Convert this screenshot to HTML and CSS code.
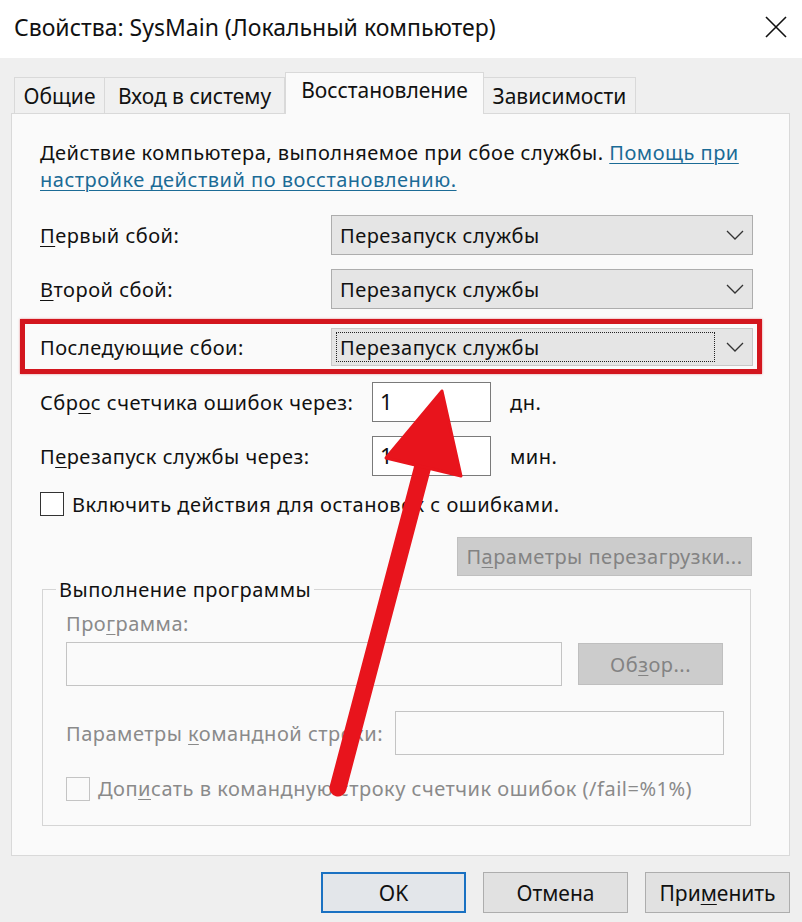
FILE: index.html
```html
<!DOCTYPE html>
<html lang="ru">
<head>
<meta charset="utf-8">
<link rel="stylesheet" href="styles.css">
</head>
<body>
<div class="window">
  <div class="titlebar">
    <span class="title">Свойства: SysMain (Локальный компьютер)</span>
    <svg class="close" width="22" height="22" viewBox="0 0 22 22"><path d="M1 1 L21 21 M21 1 L1 21" stroke="#111" stroke-width="1.6" fill="none"/></svg>
  </div>
  <div class="body">
    <div class="tabs">
      <div class="tab t1">Общие</div>
      <div class="tab t2">Вход в систему</div>
      <div class="tab t3 active">Восстановление</div>
      <div class="tab t4">Зависимости</div>
    </div>
    <div class="panel">
      <p class="desc">Действие компьютера, выполняемое при сбое службы. <span class="link">Помощь при</span><br><span class="link">настройке действий по восстановлению.</span></p>

      <div class="row r1">
        <span class="label"><u>П</u>ервый сбой:</span>
        <div class="combo"><span class="combo-text">Перезапуск службы</span><svg class="chev" width="18" height="10" viewBox="0 0 18 10"><path d="M1 1 L9 9 L17 1" stroke="#333" stroke-width="1.3" fill="none"/></svg></div>
      </div>
      <div class="row r2">
        <span class="label"><u>В</u>торой сбой:</span>
        <div class="combo"><span class="combo-text">Перезапуск службы</span><svg class="chev" width="18" height="10" viewBox="0 0 18 10"><path d="M1 1 L9 9 L17 1" stroke="#333" stroke-width="1.3" fill="none"/></svg></div>
      </div>
      <div class="row r3 marked">
        <span class="label">Последующие сбои:</span>
        <div class="combo"><span class="combo-text focus">Перезапуск службы</span><svg class="chev" width="18" height="10" viewBox="0 0 18 10"><path d="M1 1 L9 9 L17 1" stroke="#333" stroke-width="1.3" fill="none"/></svg></div>
      </div>
      <div class="row r4">
        <span class="label short">Сбр<u>о</u>с счетчика ошибок через:</span>
        <div class="num">1</div>
        <span class="unit">дн.</span>
      </div>
      <div class="row r5">
        <span class="label short">П<u>е</u>резапуск службы через:</span>
        <div class="num">1</div>
        <span class="unit">мин.</span>
      </div>
      <div class="check-row">
        <span class="box"></span>
        <span class="check-label">Включить действия для остановок с ошибками.</span>
      </div>
      <div class="btn-row">
        <div class="btn disabled wide">П<u>а</u>раметры перезагрузки...</div>
      </div>

      <fieldset class="group">
        <legend>Выполнение программы</legend>
        <div class="g-label">Про<u>г</u>рамма:</div>
        <div class="g-prog">
          <div class="g-input prog"></div>
          <div class="btn disabled browse">Об<u>з</u>ор...</div>
        </div>
        <div class="g-args">
          <span class="g-label inline">Параметры <u>к</u>омандной строки:</span>
          <div class="g-input args"></div>
        </div>
        <div class="g-check">
          <span class="box light"></span>
          <span class="g-label inline">Доп<u>и</u>сать в командную строку счетчик ошибок (/fail=%1%)</span>
        </div>
      </fieldset>
    </div>
    <div class="footer">
      <div class="btn ok">OK</div>
      <div class="btn">Отмена</div>
      <div class="btn">При<u>м</u>енить</div>
    </div>
  </div>
  <svg class="arrow" width="802" height="922" viewBox="0 0 802 922">
    <path d="M338 788 L424 462" stroke="#e8141c" stroke-width="17" stroke-linecap="round" fill="none"/>
    <path d="M442 391 L386 458 L461 476 Z" fill="#e8141c" stroke="#e8141c" stroke-width="3" stroke-linejoin="round"/>
  </svg>
</div>
</body>
</html>
```

FILE: styles.css
```css
* { box-sizing: border-box; }
html, body { margin: 0; padding: 0; }
body {
  width: 802px;
  height: 922px;
  overflow: hidden;
  font-family: "Noto Sans", "Open Sans", sans-serif;
  font-size: 20px;
  letter-spacing: 0.5px;
  color: #111;
  background: #efefef;
}
u { text-decoration: underline; text-underline-offset: 3px; text-decoration-thickness: 1px; }
.window { position: relative; width: 802px; height: 922px; }
.titlebar {
  height: 58px;
  background: #fff;
  display: flex;
  align-items: center;
  justify-content: space-between;
  padding: 0 15px 4px 14px;
}
.title { font-size: 23px; letter-spacing: 0; color: #111; }
.body { padding: 14px 12px 0 11px; }
.tabs { display: flex; align-items: flex-end; height: 41px; padding-left: 3px; position: relative; z-index: 2; }
.tab {
  height: 36px;
  border: 1px solid #d9d9d9;
  border-bottom: none;
  background: #f0f0f0;
  display: flex;
  align-items: center;
  justify-content: center;
  font-size: 21px;
  letter-spacing: 0;
}
.t1 { width: 91px; }
.t2 { width: 180px; border-left: none; }
.t3 { width: 199px; }
.t4 { width: 152px; border-left: none; }
.tab.active { height: 42px; background: #fafafa; margin-bottom: -1px; padding-bottom: 8px; }
.panel {
  position: relative;
  z-index: 1;
  background: #fafafa;
  border: 1px solid #d9d9d9;
  height: 743px;
  padding: 25px 36px 0 28px;
}
.desc { margin: 0; line-height: 27px; }
.link { color: #1b6b96; text-decoration: underline; text-underline-offset: 3px; text-decoration-thickness: 1px; }
.row { display: flex; align-items: center; height: 40px; position: relative; }
.r1 { margin-top: 22px; }
.r2 { margin-top: 14px; }
.r3 { margin-top: 19px; height: 38px; }
.r4 { margin-top: 16px; }
.r5 { margin-top: 14px; }
.label { width: 291px; flex: none; }
.label.short { width: 332px; }
.combo {
  width: 422px;
  height: 40px;
  background: #e5e5e5;
  border: 1px solid #adadad;
  display: flex;
  align-items: center;
  justify-content: space-between;
  padding: 0 8px 0 5px;
}
.r3 .combo { height: 38px; border-color: #c8c8c8; padding-left: 4px; }
.combo-text { padding: 1px 3px; }
.combo-text.focus { border: 1px dotted #222; width: 379px; height: 30px; display: flex; align-items: center; padding-left: 3px; }
.chev { flex: none; }
.marked::after {
  content: "";
  position: absolute;
  left: -20px;
  right: -9px;
  top: -9px;
  bottom: -8px;
  border: 5px solid #d3161e;
  box-shadow: 0 0 2px rgba(210,20,30,0.5);
}
.num {
  width: 119px;
  height: 40px;
  border: 1px solid #7a7a7a;
  background: #fff;
  padding: 3px 0 0 7px;
  font-size: 22px;
  flex: none;
}
.unit { margin-left: 19px; }
.check-row { display: flex; align-items: center; margin-top: 16px; height: 24px; }
.box { width: 24px; height: 24px; border: 1px solid #333; background: #fff; flex: none; }
.box.light { border-color: #c4c4c4; background: #fafafa; }
.check-label { margin-left: 8px; }
.btn-row { display: flex; justify-content: flex-end; margin-top: 21px; padding-right: 1px; }
.btn {
  width: 146px;
  height: 40px;
  background: #e1e1e1;
  border: 1px solid #adadad;
  display: flex;
  align-items: center;
  justify-content: center;
}
.btn.disabled { background: #cccccc; border-color: #bfbfbf; color: #838383; }
.btn.wide { width: 295px; height: 39px; }
.group {
  margin: 0 0 0 2px;
  width: 709px;
  height: 250px;
  border: 1px solid #d5d5d5;
  padding: 7px 0 0 23px;
  position: relative;
}
.group legend { padding: 0 3px; margin-left: -10px; }
.g-label { color: #8a8a8a; }
.g-prog { display: flex; align-items: center; margin-top: 5px; }
.g-input { height: 44px; border: 1px solid #c4c4c4; background: #fafafa; }
.prog { width: 496px; }
.browse { width: 145px; height: 42px; margin-left: 16px; }
.g-args { display: flex; align-items: center; margin-top: 25px; }
.args { width: 329px; margin-left: 12px; }
.g-check { display: flex; align-items: center; margin-top: 20px; }
.g-check .g-label { margin-left: 8px; }
.footer { display: flex; justify-content: flex-end; gap: 17px; padding: 16px 0 0 0; }
.footer .btn { width: 145px; height: 41px; font-size: 21px; letter-spacing: 0; }
.footer .btn.ok { border: 2px solid #1a71c2; background: #e3e6ea; }
.arrow { position: absolute; left: 0; top: 0; z-index: 10; pointer-events: none; }
```
